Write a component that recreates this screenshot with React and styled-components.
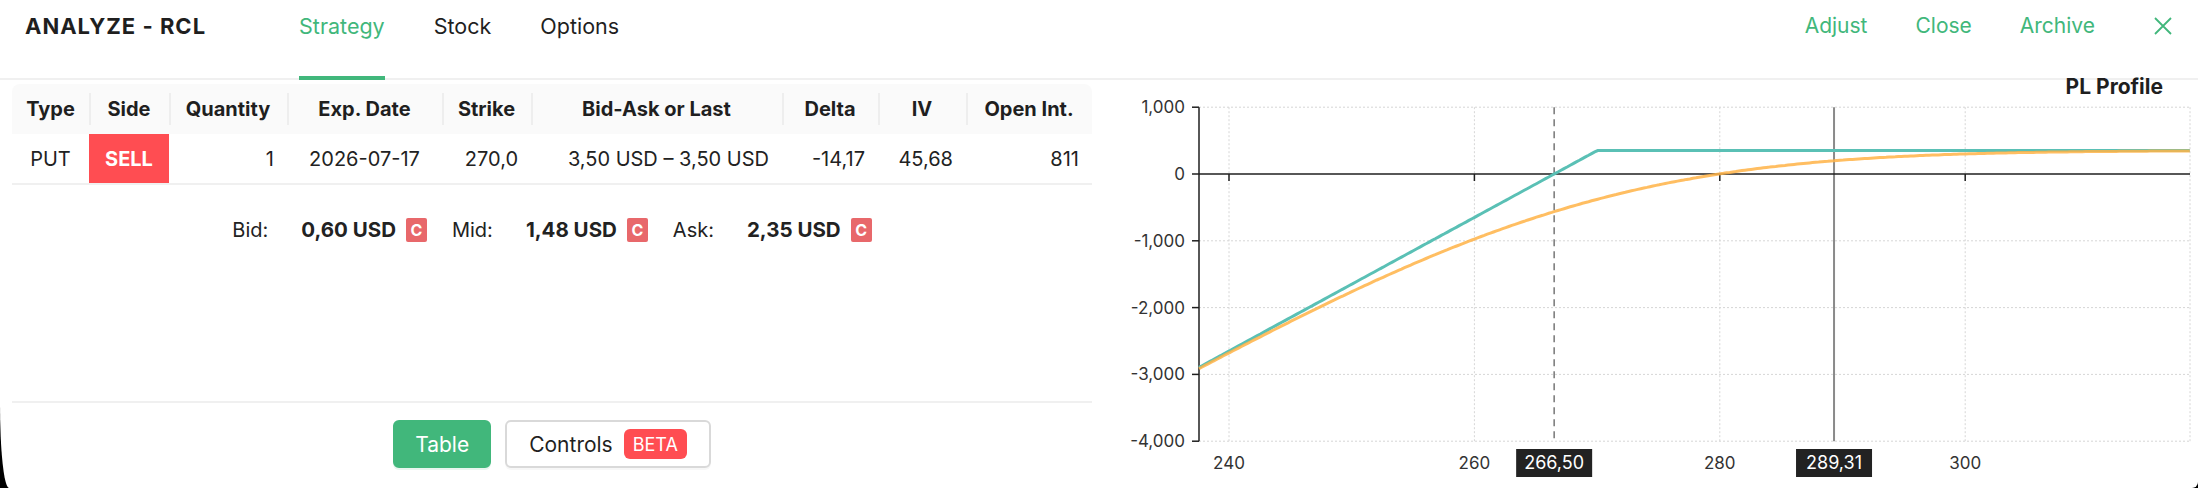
import { createGlobalStyle, styled } from 'styled-components';

const GlobalStyle = createGlobalStyle`
  html, body {
    margin: 0;
    background: #000;
  }
  body {
    font-family: Inter, "Noto Sans", sans-serif;
    color: #1f1f1f;
  }
  * {
    box-sizing: border-box;
  }
`;

const GREEN = '#41b77b';

const Page = styled.div`
  width: 2198px;
  height: 488px;
  background: #fff;
  display: flex;
  flex-direction: column;
  border-bottom-left-radius: 9px 84px;
  border-bottom-right-radius: 6px;
  overflow: hidden;
`;

const Header = styled.header`
  height: 80px;
  flex-shrink: 0;
  display: flex;
  padding: 0 25px;
  border-bottom: 2px solid #f0f0f0;
`;

const Title = styled.h1`
  margin: 0 93px 0 0;
  padding-top: 12px;
  font-size: 22px;
  letter-spacing: 1px;
  line-height: 28px;
  font-weight: 700;
  color: #1f1f1f;
`;

const Tabs = styled.nav`
  display: flex;
  gap: 49px;
`;

const Tab = styled.div`
  padding-top: 12px;
  font-size: 21.5px;
  line-height: 28px;
  margin-bottom: -2px;
  color: ${(p) => (p.$active ? GREEN : '#1f1f1f')};
  border-bottom: 4px solid ${(p) => (p.$active ? GREEN : 'transparent')};
`;

const Actions = styled.div`
  margin-left: auto;
  display: flex;
  gap: 48px;
  padding-top: 12px;
`;

const Action = styled.span`
  font-size: 21px;
  line-height: 28px;
  color: ${GREEN};
`;

const CloseIcon = styled.svg`
  margin: 4px 0 0 10px;
  width: 20px;
  height: 20px;
`;

const Body = styled.div`
  flex: 1;
  display: flex;
  min-height: 0;
`;

const LeftPanel = styled.section`
  width: 1100px;
  flex-shrink: 0;
  display: flex;
  flex-direction: column;
  padding: 4px 8px 0 12px;
`;

const Table = styled.table`
  width: 1080px;
  table-layout: fixed;
  border-collapse: separate;
  border-spacing: 0;
  font-size: 20px;
`;

const Th = styled.th`
  position: relative;
  height: 50px;
  padding: 0 8px;
  background: #fafafa;
  font-weight: 700;
  text-align: center;
  white-space: nowrap;
  color: #1f1f1f;

  &:first-child {
    border-top-left-radius: 8px;
  }
  &:last-child {
    border-top-right-radius: 8px;
  }
  &:not(:first-child)::before {
    content: '';
    position: absolute;
    left: 0;
    top: 50%;
    width: 2px;
    height: 32px;
    transform: translateY(-50%);
    background: #eeeeee;
  }
`;

const Td = styled.td`
  height: 51px;
  padding: 0 13px;
  border-bottom: 2px solid #f0f0f0;
  text-align: ${(p) => p.$align || 'center'};
  white-space: nowrap;
  color: #222;
`;

const SideCell = styled(Td)`
  background: #ff4d52;
  color: #fff;
  font-weight: 700;
`;

const QuoteRow = styled.div`
  margin-top: 31px;
  display: flex;
  justify-content: center;
  gap: 25px;
  font-size: 20px;
  line-height: 28px;
  color: #222;
`;

const QuoteItem = styled.span`
  display: flex;
  align-items: center;
`;

const QuoteLabel = styled.span`
  margin-right: 33px;
`;

const QuoteValue = styled.span`
  font-size: 20.5px;
  font-weight: 700;
`;

const CBadge = styled.span`
  margin-left: 10px;
  width: 21px;
  height: 24px;
  display: inline-flex;
  align-items: center;
  justify-content: center;
  background: #e8686b;
  color: #fff;
  font-size: 16px;
  font-weight: 700;
  border-radius: 2px;
`;

const ButtonRow = styled.div`
  margin-top: auto;
  border-top: 2px solid #f0f0f0;
  padding: 17px 0 20px;
  display: flex;
  justify-content: center;
  gap: 14px;
`;

const Button = styled.button`
  height: 48px;
  display: inline-flex;
  align-items: center;
  gap: 11px;
  padding: 0 ${(p) => (p.$primary ? '20px' : '22px')};
  border-radius: 6px;
  font-family: inherit;
  font-size: 21px;
  border: 2px solid ${(p) => (p.$primary ? GREEN : '#d9d9d9')};
  background: ${(p) => (p.$primary ? GREEN : '#fff')};
  color: ${(p) => (p.$primary ? '#fff' : '#1f1f1f')};
  box-shadow: 0 2px 0 ${(p) => (p.$primary ? 'rgba(65,183,123,0.12)' : 'rgba(0,0,0,0.03)')};
`;

const BetaTag = styled.span`
  height: 30px;
  padding: 0 9px;
  display: inline-flex;
  align-items: center;
  border-radius: 6px;
  background: #ff4d52;
  color: #fff;
  font-size: 18px;
`;

const ChartPanel = styled.section`
  flex: 1;
  display: flex;
  flex-direction: column;
  min-width: 0;
`;

const ChartTitle = styled.h2`
  margin: -3px 0 0;
  padding-right: 35px;
  text-align: right;
  font-size: 21px;
  line-height: 20px;
  font-weight: 700;
  color: #1f1f1f;
`;

const ChartSvg = styled.svg`
  display: block;

  text {
    font-family: Inter, "Noto Sans", sans-serif;
    font-size: 17px;
    fill: #333;
  }
`;

// payoff of a short put, strike 270, sold at 3.50
const K = 270;
const PREMIUM = 3.5;
const SIGMA = 0.4568;
const T = 0.022;

function ncdf(x) {
  const t = 1 / (1 + 0.2316419 * Math.abs(x));
  const d = 0.3989423 * Math.exp((-x * x) / 2);
  const p =
    d * t * (0.3193815 + t * (-0.3565638 + t * (1.781478 + t * (-1.821256 + t * 1.330274))));
  return x > 0 ? 1 - p : p;
}

function putPrice(s) {
  const v = SIGMA * Math.sqrt(T);
  const d1 = (Math.log(s / K) + 0.5 * SIGMA * SIGMA * T) / v;
  const d2 = d1 - v;
  return K * ncdf(-d2) - s * ncdf(-d1);
}

const W = 1098;
const H = 391;
const LEFT = 99;
const RIGHT = 1090;
const xPx = (v) => 129 + (v - 240) * 12.27;
const yPx = (v) => 77 - (v / 1000) * 66.8;
const TOP = yPx(1000);
const BOTTOM = yPx(-4000);
const X_MIN = 240 + (LEFT - 129) / 12.27;
const X_MAX = 240 + (RIGHT - 129) / 12.27;

function linePath(fn) {
  const pts = [];
  for (let s = X_MIN; s <= X_MAX + 0.001; s += 0.25) {
    pts.push(`${xPx(s).toFixed(1)},${yPx(fn(s)).toFixed(1)}`);
  }
  return 'M' + pts.join('L');
}

function PLChart() {
  const yTicks = [1000, 0, -1000, -2000, -3000, -4000];
  const xTicks = [240, 260, 280, 300];
  const expiry = linePath((s) => (PREMIUM - Math.max(K - s, 0)) * 100);
  const today = linePath((s) => (PREMIUM - putPrice(s)) * 100);
  const markers = [
    { v: 266.5, label: '266,50', dashed: true },
    { v: 289.31, label: '289,31', dashed: false },
  ];

  return (
    <ChartSvg width={W} height={H} viewBox={`0 0 ${W} ${H}`}>
      <g stroke="#d6d6d6" strokeWidth="1" strokeDasharray="2 2">
        {yTicks
          .filter((v) => v !== 0)
          .map((v) => (
            <line key={v} x1={LEFT} x2={RIGHT} y1={yPx(v)} y2={yPx(v)} />
          ))}
        {xTicks.map((v) => (
          <line key={v} x1={xPx(v)} x2={xPx(v)} y1={TOP} y2={BOTTOM} />
        ))}
        <line x1={RIGHT} x2={RIGHT} y1={TOP} y2={BOTTOM} />
      </g>

      {markers.map((m) => (
        <line
          key={m.label}
          x1={xPx(m.v)}
          x2={xPx(m.v)}
          y1={TOP}
          y2={BOTTOM}
          stroke={m.dashed ? '#777' : '#8a8a8a'}
          strokeWidth={m.dashed ? 1.5 : 2}
          strokeDasharray={m.dashed ? '7 5' : undefined}
        />
      ))}

      <g stroke="#1f1f1f" strokeWidth="1.5">
        <line x1={LEFT} x2={LEFT} y1={TOP} y2={BOTTOM} />
        <line x1={LEFT} x2={RIGHT} y1={yPx(0)} y2={yPx(0)} />
        {yTicks.map((v) => (
          <line key={v} x1={LEFT - 7} x2={LEFT} y1={yPx(v)} y2={yPx(v)} />
        ))}
        {xTicks.map((v) => (
          <line key={v} x1={xPx(v)} x2={xPx(v)} y1={yPx(0)} y2={yPx(0) + 7} />
        ))}
      </g>

      {yTicks.map((v) => (
        <text key={v} x={LEFT - 14} y={yPx(v) + 6} textAnchor="end">
          {v.toLocaleString('en-US')}
        </text>
      ))}
      {xTicks.map((v) => (
        <text key={v} x={xPx(v)} y={372} textAnchor="middle">
          {v}
        </text>
      ))}

      <path d={expiry} fill="none" stroke="#5ac0b5" strokeWidth="3" />
      <path d={today} fill="none" stroke="#ffb347" strokeOpacity="0.85" strokeWidth="3" />

      {markers.map((m) => (
        <g key={m.label}>
          <rect x={xPx(m.v) - 38} y={352} width={76} height={28} fill="#222" />
          <text
            x={xPx(m.v)}
            y={372}
            textAnchor="middle"
            style={{ fill: '#fff', fontSize: 18 }}
          >
            {m.label}
          </text>
        </g>
      ))}
    </ChartSvg>
  );
}

const legs = [
  {
    type: 'PUT',
    side: 'SELL',
    quantity: 1,
    expDate: '2026-07-17',
    strike: '270,0',
    bidAsk: '3,50 USD – 3,50 USD',
    delta: '-14,17',
    iv: '45,68',
    openInt: 811,
  },
];

const columns = [
  ['Type', 77],
  ['Side', 80],
  ['Quantity', 118],
  ['Exp. Date', 155],
  ['Strike', 89],
  ['Bid-Ask or Last', 251],
  ['Delta', 96],
  ['IV', 88],
  ['Open Int.', 126],
];

const quotes = [
  ['Bid:', '0,60 USD'],
  ['Mid:', '1,48 USD'],
  ['Ask:', '2,35 USD'],
];

function App() {
  return (
    <>
      <GlobalStyle />
      <Page>
        <Header>
          <Title>ANALYZE - RCL</Title>
          <Tabs>
            <Tab $active>Strategy</Tab>
            <Tab>Stock</Tab>
            <Tab>Options</Tab>
          </Tabs>
          <Actions>
            <Action>Adjust</Action>
            <Action>Close</Action>
            <Action>Archive</Action>
            <CloseIcon viewBox="0 0 20 20">
              <path d="M2 2 L18 18 M18 2 L2 18" stroke={GREEN} strokeWidth="1.8" fill="none" />
            </CloseIcon>
          </Actions>
        </Header>

        <Body>
          <LeftPanel>
            <Table>
              <colgroup>
                {columns.map(([name, width]) => (
                  <col key={name} style={{ width }} />
                ))}
              </colgroup>
              <thead>
                <tr>
                  {columns.map(([name]) => (
                    <Th key={name}>{name}</Th>
                  ))}
                </tr>
              </thead>
              <tbody>
                {legs.map((leg) => (
                  <tr key={leg.strike}>
                    <Td>{leg.type}</Td>
                    <SideCell>{leg.side}</SideCell>
                    <Td $align="right">{leg.quantity}</Td>
                    <Td>{leg.expDate}</Td>
                    <Td $align="right">{leg.strike}</Td>
                    <Td $align="right">{leg.bidAsk}</Td>
                    <Td $align="right">{leg.delta}</Td>
                    <Td $align="right">{leg.iv}</Td>
                    <Td $align="right">{leg.openInt}</Td>
                  </tr>
                ))}
              </tbody>
            </Table>

            <QuoteRow>
              {quotes.map(([label, value]) => (
                <QuoteItem key={label}>
                  <QuoteLabel>{label}</QuoteLabel>
                  <QuoteValue>{value}</QuoteValue>
                  <CBadge>C</CBadge>
                </QuoteItem>
              ))}
            </QuoteRow>

            <ButtonRow>
              <Button $primary>Table</Button>
              <Button>
                Controls <BetaTag>BETA</BetaTag>
              </Button>
            </ButtonRow>
          </LeftPanel>

          <ChartPanel>
            <ChartTitle>PL Profile</ChartTitle>
            <PLChart />
          </ChartPanel>
        </Body>
      </Page>
    </>
  );
}

export default App;
